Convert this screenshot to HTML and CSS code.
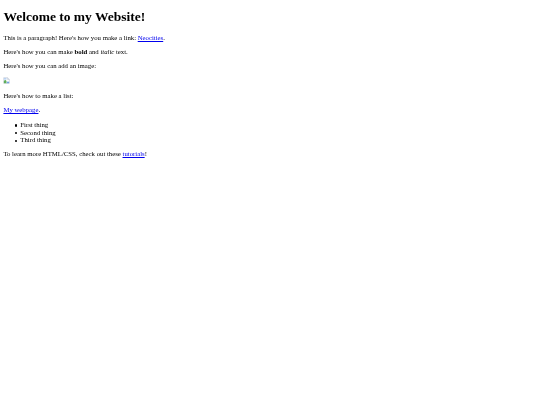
FILE: index.html
```html
<!DOCTYPE html>
<html>
<head>
<meta charset="utf-8" />
<title>My Website</title>
<link rel="stylesheet" href="styles.css">
</head>
<body>
    <h1>Welcome to my Website!</h1>
    <p>This is a paragraph! Here's how you make a link: <a href="#">Neocities</a>.</p>
    <p>Here's how you can make <strong>bold</strong> and <em>italic</em> text.</p>
    <p>Here's how you can add an image:</p>
    <p class="picture">
        <svg class="broken" viewBox="0 0 16 16">
            <path d="M1.5 1.5h9l4 4v9h-13z" fill="#fff" stroke="#a9b4c4"/>
            <path d="M10.5 1.5v4h4" fill="#dfe6f0" stroke="#a9b4c4"/>
            <path d="M2 9l3-3 3 3v5H2z" fill="#5fae5a"/>
            <path d="M8 14l2-4 4 1v3z" fill="#6f9fe0"/>
            <path d="M2 2h6v4H2z" fill="#b9d2f2"/>
        </svg>
    </p>
    <p>Here's how to make a list:</p>
    <p><a href="#">My webpage</a>.</p>
    <ul>
        <li>First thing</li>
        <li>Second thing</li>
        <li>Third thing</li>
    </ul>
    <p>To learn more HTML/CSS, check out these <a href="#">tutorials</a>!</p>
</body>
</html>
```

FILE: styles.css
```css
html{
    background:#fff;
}
body{
    margin:3.4px;
    font-family:"Liberation Serif",serif;
    font-size:6.75px;
    line-height:7.6px;
    color:#000;
    filter:blur(0.3px);
}
h1{
    font-size:2em;
    line-height:15px;
    margin:6px 0 10px;
}
p{
    margin:6.4px 0;
}
ul{
    margin:7.4px 0 6.4px;
    padding-left:16.9px;
    list-style:none;
}
li::before{
    content:"";
    display:inline-block;
    width:2.2px;
    height:2.2px;
    margin-left:-5.2px;
    margin-right:3px;
    border-radius:50%;
    background:#000;
    vertical-align:0.8px;
}
a{
    color:#00e;
}
.picture{
    margin:7.4px 0 6.4px;
}
.broken{
    width:7px;
    height:7px;
}
```
